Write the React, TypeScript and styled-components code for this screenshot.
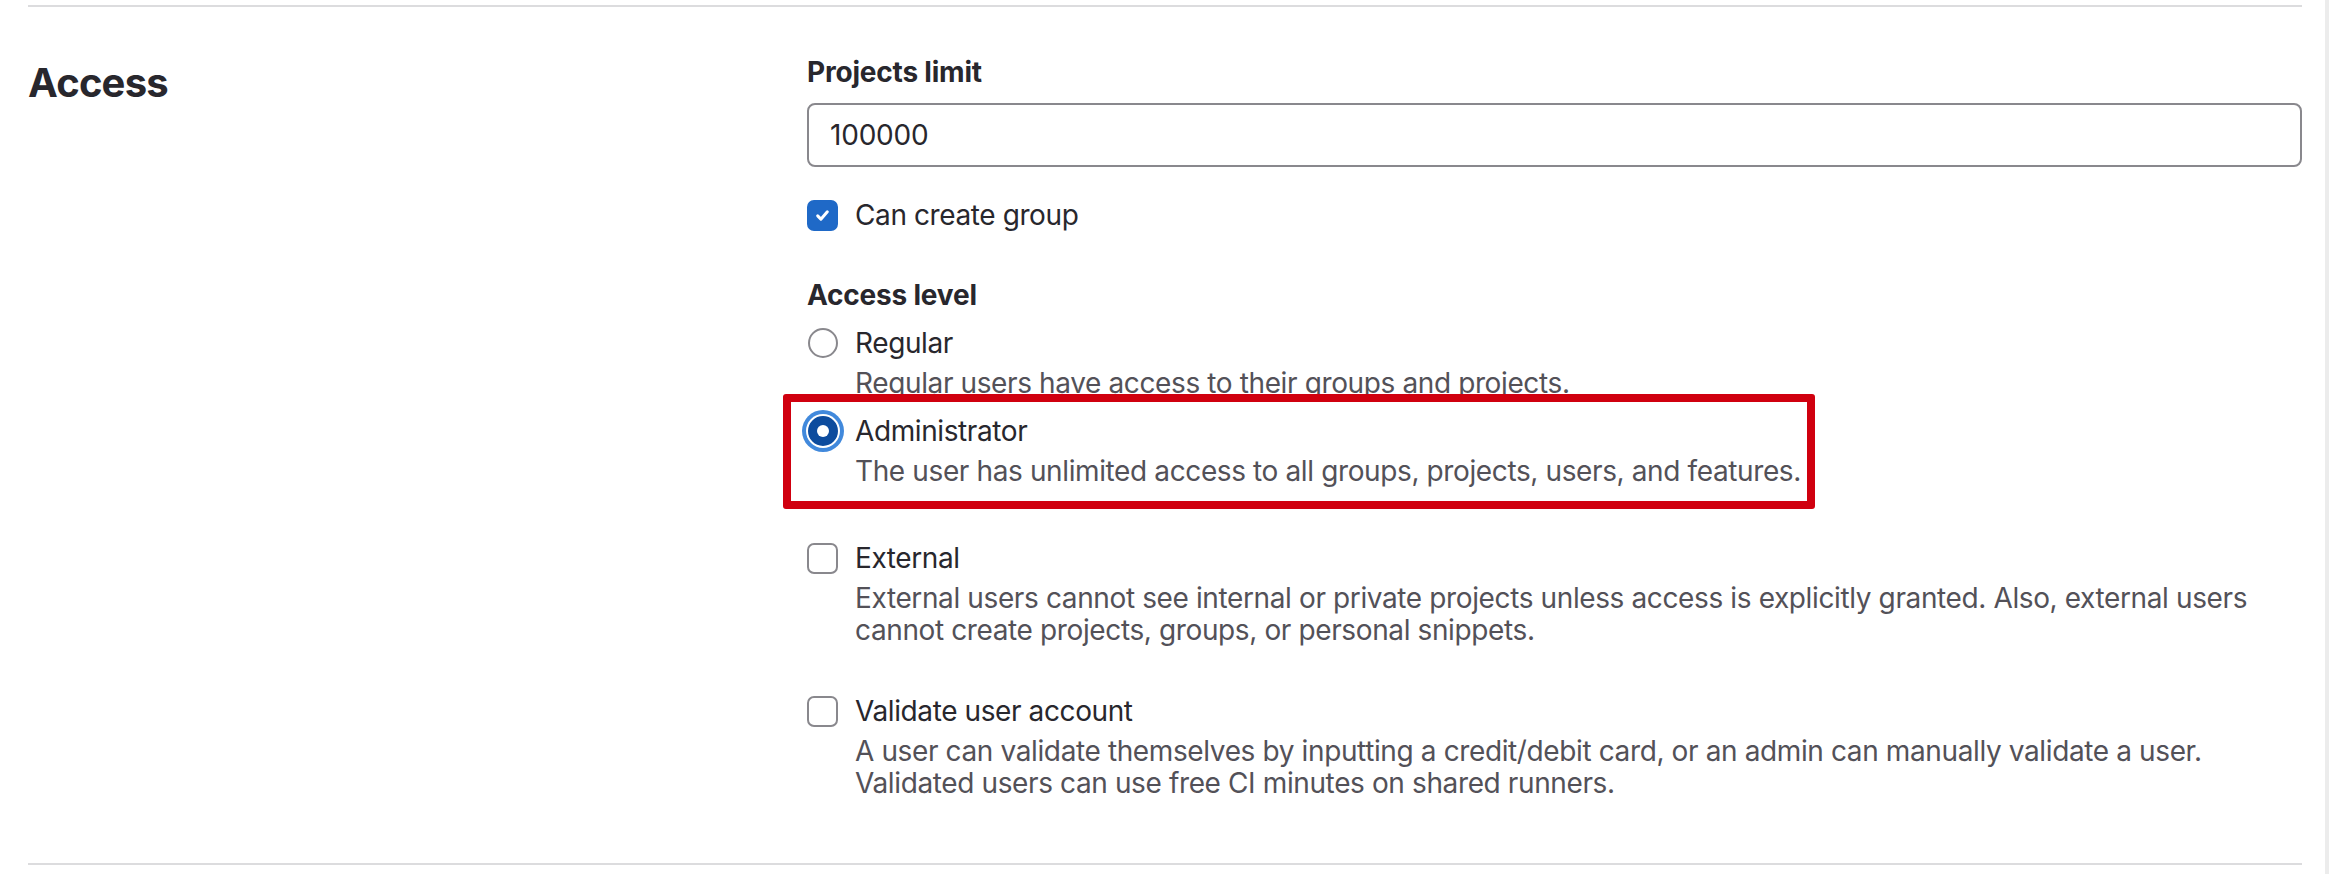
import React from 'react';
import styled, { createGlobalStyle } from 'styled-components';

const GlobalStyle = createGlobalStyle`
    html, body {
        margin:0;
        padding:0;
        background:#fff;
    }
    body {
        font-family:Inter, "Noto Sans", "Liberation Sans", sans-serif;
        color:#28272d;
    }
`

type OptionProps = {
    control: 'radio' | 'checkbox';
    checked?: boolean;
    focused?: boolean;
    label: string;
    help?: string;
    highlight?: boolean;
    gap: number;
}

const CheckMark = () => (
    <svg width="15" height="13" viewBox="0 0 14 12" fill="none">
        <path d="M2.5 6.4l3 3 6-6.8" stroke="#fff" strokeWidth="2.8" strokeLinecap="round" strokeLinejoin="round" />
    </svg>
)

const Option: React.FC<OptionProps> = ({ control, checked, focused, label, help, highlight, gap }) => {
    return(
        <OptionRow $gap={gap}>
            <ControlSlot>
                {control === 'radio'
                    ? <Radio $checked={checked} $focused={focused}>{checked && <RadioDot />}</Radio>
                    : <Checkbox $checked={checked}>{checked && <CheckMark />}</Checkbox>}
            </ControlSlot>
            <OptionText>
                <OptionLabel>{label}</OptionLabel>
                {help && <HelpText>{help}</HelpText>}
            </OptionText>
            {highlight && <HighlightBox />}
        </OptionRow>
    )
}

const App:React.FC = () => {
    return(
        <>
            <GlobalStyle />
            <Page>
                <Main>
                    <Section>
                        <SectionTitle>Access</SectionTitle>
                        <SectionBody>
                            <FieldLabel>Projects limit</FieldLabel>
                            <TextInput defaultValue="100000" readOnly />
                            <Option control="checkbox" checked label="Can create group" gap={28} />

                            <GroupLabel>Access level</GroupLabel>
                            <Option
                                control="radio"
                                label="Regular"
                                help="Regular users have access to their groups and projects."
                                gap={8}
                            />
                            <Option
                                control="radio"
                                checked
                                focused
                                highlight
                                label="Administrator"
                                help="The user has unlimited access to all groups, projects, users, and features."
                                gap={12}
                            />
                            <Option
                                control="checkbox"
                                label="External"
                                help="External users cannot see internal or private projects unless access is explicitly granted. Also, external users cannot create projects, groups, or personal snippets."
                                gap={51}
                            />
                            <Option
                                control="checkbox"
                                label="Validate user account"
                                help="A user can validate themselves by inputting a credit/debit card, or an admin can manually validate a user. Validated users can use free CI minutes on shared runners."
                                gap={45}
                            />
                        </SectionBody>
                    </Section>
                </Main>
                <ScrollGutter />
            </Page>
        </>
    )
}

export default App;

const Page = styled.div`
    display:flex;
    width:2336px;
    height:874px;
    overflow:hidden;
`

const Main = styled.div`
    width:2325px;
    padding-left:28px;
    box-sizing:border-box;
`

const ScrollGutter = styled.div`
    flex:1;
    border-left:4px solid #ececec;
`

const Section = styled.section`
    width:2274px;
    margin-top:5px;
    border-top:2px solid #dcdcde;
    border-bottom:2px solid #dcdcde;
    display:grid;
    grid-template-columns:779px 1fr;
    padding:45px 0 64px;
`

const SectionTitle = styled.h4`
    margin:7px 0 0;
    font-size:40px;
    line-height:48px;
    font-weight:700;
    color:#28272d;
    letter-spacing:-0.8px;
`

const SectionBody = styled.div`
    display:flex;
    flex-direction:column;
`

const FieldLabel = styled.label`
    font-size:28px;
    line-height:40px;
    font-weight:700;
    color:#28272d;
    letter-spacing:-0.2px;
    margin-bottom:11px;
`

const GroupLabel = styled(FieldLabel)`
    margin-top:40px;
    margin-bottom:0;
`

const TextInput = styled.input`
    height:64px;
    box-sizing:border-box;
    border:2px solid #89888d;
    border-radius:8px;
    padding:0 21px;
    font-family:inherit;
    font-size:28px;
    letter-spacing:-0.2px;
    color:#28272d;
    outline:none;
`

const OptionRow = styled.div<{ $gap: number }>`
    position:relative;
    display:flex;
    margin-top:${({ $gap }) => $gap}px;
`

const ControlSlot = styled.div`
    width:48px;
    height:40px;
    flex-shrink:0;
    display:flex;
    align-items:center;
`

const Checkbox = styled.span<{ $checked?: boolean }>`
    width:31px;
    height:31px;
    box-sizing:border-box;
    border-radius:7px;
    display:flex;
    align-items:center;
    justify-content:center;
    background:${({ $checked }) => $checked ? '#1f69c7' : '#fff'};
    border:2px solid ${({ $checked }) => $checked ? '#1f69c7' : '#89888d'};
`

const Radio = styled.span<{ $checked?: boolean; $focused?: boolean }>`
    width:30px;
    height:30px;
    box-sizing:border-box;
    border-radius:50%;
    display:flex;
    align-items:center;
    justify-content:center;
    margin-left:1px;
    background:${({ $checked }) => $checked ? '#0d4c9e' : '#fff'};
    border:2px solid ${({ $checked }) => $checked ? '#0d4c9e' : '#89888d'};
    box-shadow:${({ $focused }) => $focused ? '0 0 0 2px #fff, 0 0 0 6px #4189dc' : 'none'};
`

const RadioDot = styled.span`
    width:12px;
    height:12px;
    border-radius:50%;
    background:#fff;
`

const OptionText = styled.div`
    display:flex;
    flex-direction:column;
`

const OptionLabel = styled.span`
    font-size:28px;
    line-height:40px;
    letter-spacing:-0.4px;
    color:#28272d;
`

const HelpText = styled.p`
    margin:4px 0 0;
    font-size:28px;
    line-height:32px;
    letter-spacing:-0.38px;
    color:#535158;
`

const HighlightBox = styled.div`
    position:absolute;
    left:-24px;
    top:-17px;
    width:1032px;
    height:115px;
    box-sizing:border-box;
    border:8px solid #d0000f;
    border-radius:3px;
    pointer-events:none;
`
